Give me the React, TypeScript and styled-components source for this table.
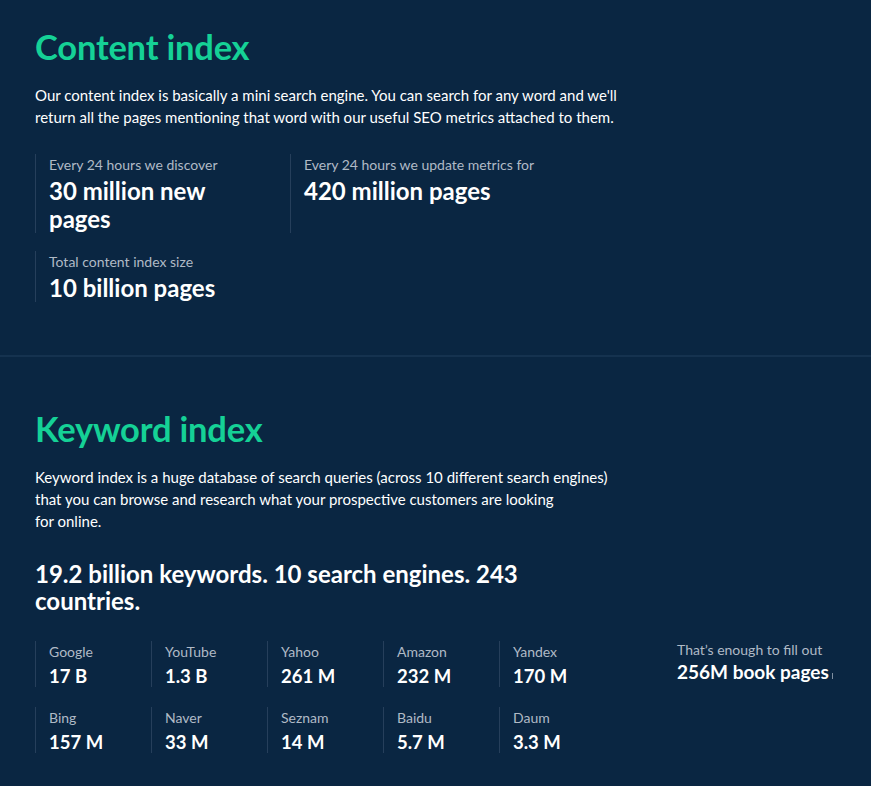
import React from 'react'
import styled, { createGlobalStyle } from 'styled-components'

const GlobalStyle = createGlobalStyle`
  html, body {
    margin: 0;
    padding: 0;
    background: #0a2642;
  }
  body {
    font-family: Lato, "Open Sans", sans-serif;
    color: #ffffff;
    -webkit-font-smoothing: antialiased;
  }
`

const Page = styled.div`
  min-height: 786px;
  background: #0a2642;
`

const Section = styled.section<{ $top: number; $bottom: number }>`
  padding: ${(p) => p.$top}px 35px ${(p) => p.$bottom}px;
`

const Divider = styled.hr`
  margin: 0;
  border: 0;
  height: 2px;
  background: #15324f;
`

const Heading = styled.h2`
  margin: 0;
  font-size: 34.5px;
  line-height: 40px;
  font-weight: 700;
  color: #15d196;
  letter-spacing: -0.2px;
`

const Lead = styled.p`
  margin: 17px 0 0;
  max-width: 585px;
  font-size: 15px;
  line-height: 22px;
  color: #ffffff;
`

const StatGrid = styled.div`
  display: grid;
  grid-template-columns: 255px 255px;
  row-gap: 18px;
  margin-top: 26px;
`

const Stat = styled.div`
  border-left: 1px solid #263f5b;
  padding: 2px 40px 0 13px;
`

const Label = styled.div`
  font-size: 14px;
  line-height: 18px;
  color: #b0bac6;
  white-space: nowrap;
`

const StatValue = styled.div`
  margin-top: 3px;
  font-size: 24px;
  line-height: 28px;
  font-weight: 700;
  color: #ffffff;
`

const Summary = styled.div`
  margin-top: 28px;
  max-width: 540px;
  font-size: 24px;
  line-height: 27px;
  font-weight: 700;
`

const EngineArea = styled.div`
  display: flex;
  align-items: flex-start;
  margin-top: 27px;
`

const EngineGrid = styled.div`
  display: grid;
  grid-template-columns: repeat(5, 116px);
  row-gap: 20px;
`

const Engine = styled.div`
  border-left: 1px solid #263f5b;
  padding: 2px 10px 0 13px;
`

const EngineValue = styled.div`
  margin-top: 4px;
  font-size: 18.5px;
  line-height: 22px;
  font-weight: 700;
`

const Aside = styled.div`
  margin-left: 62px;
  position: relative;
`

const AsideValue = styled.div`
  margin-top: 2px;
  font-size: 19px;
  line-height: 22px;
  font-weight: 700;
`

const Tick = styled.span`
  position: absolute;
  right: -4px;
  bottom: 4px;
  width: 1px;
  height: 6px;
  background: #7f8fa1;
`

const engines = [
  { name: 'Google', value: '17 B' },
  { name: 'YouTube', value: '1.3 B' },
  { name: 'Yahoo', value: '261 M' },
  { name: 'Amazon', value: '232 M' },
  { name: 'Yandex', value: '170 M' },
  { name: 'Bing', value: '157 M' },
  { name: 'Naver', value: '33 M' },
  { name: 'Seznam', value: '14 M' },
  { name: 'Baidu', value: '5.7 M' },
  { name: 'Daum', value: '3.3 M' },
]

export default function App() {
  return (
    <Page>
      <GlobalStyle />
      <Section $top={27} $bottom={53}>
        <Heading>Content index</Heading>
        <Lead>
          Our content index is basically a mini search engine. You can search for any word and
          we'll return all the pages mentioning that word with our useful SEO metrics attached to
          them.
        </Lead>
        <StatGrid>
          <Stat>
            <Label>Every 24 hours we discover</Label>
            <StatValue>30 million new pages</StatValue>
          </Stat>
          <Stat>
            <Label>Every 24 hours we update metrics for</Label>
            <StatValue>420 million pages</StatValue>
          </Stat>
          <Stat>
            <Label>Total content index size</Label>
            <StatValue>10 billion pages</StatValue>
          </Stat>
        </StatGrid>
      </Section>
      <Divider />
      <Section $top={52} $bottom={30}>
        <Heading>Keyword index</Heading>
        <Lead>
          Keyword index is a huge database of search queries (across 10 different search engines)
          that you can browse and research what your prospective customers are looking
          for&nbsp;online.
        </Lead>
        <Summary>19.2 billion keywords. 10 search engines. 243 countries.</Summary>
        <EngineArea>
          <EngineGrid>
            {engines.map((e) => (
              <Engine key={e.name}>
                <Label>{e.name}</Label>
                <EngineValue>{e.value}</EngineValue>
              </Engine>
            ))}
          </EngineGrid>
          <Aside>
            <Label>That’s enough to fill out</Label>
            <AsideValue>256M book pages</AsideValue>
            <Tick />
          </Aside>
        </EngineArea>
      </Section>
    </Page>
  )
}
